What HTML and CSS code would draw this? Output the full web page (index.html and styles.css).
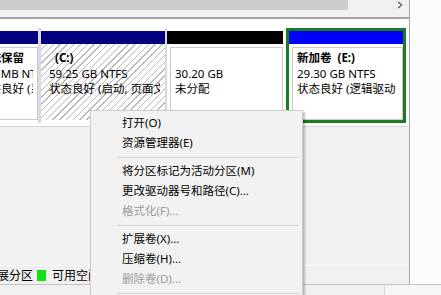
FILE: index.html
```html
<!DOCTYPE html>
<html lang="zh-CN">
	<head>
		<meta charset="UTF-8" />
		<title>磁盘管理</title>
		<link rel="stylesheet" href="styles.css">
	</head>
	<body>
		<div class="window">
			<div class="workspace">
				<div class="pane">
					<div class="hscroll">
						<div class="hscroll-thumb"></div>
						<svg class="hscroll-arrow" width="6" height="8" viewBox="0 0 6 8">
							<path d="M1.2 1 L4.6 4 L1.2 7" fill="none" stroke="#5f5f5f" stroke-width="1.3" />
						</svg>
					</div>
					<div class="graph">
						<div class="disk-row">
							<div class="part part-system">
								<div class="part-head head-primary"></div>
								<div class="part-body">
									<div class="part-box">
										<div class="part-text">
											<b>系统保留</b><br />500 MB NTFS<br />状态良好 (系统, 活动, 主分区)
										</div>
									</div>
								</div>
							</div>
							<div class="part part-c">
								<div class="part-head head-primary"></div>
								<div class="part-body">
									<div class="part-box">
										<div class="part-text">
											<b>&nbsp;&nbsp;(C:)</b><br />59.25 GB NTFS<br />状态良好 (启动, 页面文件, 故障转储, 主分区)
										</div>
									</div>
								</div>
							</div>
							<div class="part part-free">
								<div class="part-head head-free"></div>
								<div class="part-body">
									<div class="part-box">
										<div class="part-text">&nbsp;<br />30.20 GB<br />未分配</div>
									</div>
								</div>
							</div>
							<div class="part part-e">
								<div class="part-head head-logical"></div>
								<div class="part-body">
									<div class="part-box">
										<div class="part-text">
											<b>新加卷&nbsp; (E:)</b><br />29.30 GB NTFS<br />状态良好 (逻辑驱动器)
										</div>
									</div>
								</div>
							</div>
						</div>
						<div class="graph-fill"></div>
						<div class="legend">
							<span class="legend-swatch swatch-extended"></span>
							<span class="legend-text">扩展分区</span>
							<span class="legend-swatch swatch-free"></span>
							<span class="legend-text">可用空间</span>
						</div>
					</div>
				</div>
				<div class="side"></div>
			</div>
			<div class="statusbar">
				<div class="status-pane"></div>
				<div class="status-pane status-last"></div>
			</div>
		</div>

		<div class="context-menu">
			<div class="menu-item">打开(O)</div>
			<div class="menu-item">资源管理器(E)</div>
			<div class="menu-sep"></div>
			<div class="menu-item">将分区标记为活动分区(M)</div>
			<div class="menu-item">更改驱动器号和路径(C)...</div>
			<div class="menu-item disabled">格式化(F)...</div>
			<div class="menu-sep"></div>
			<div class="menu-item">扩展卷(X)...</div>
			<div class="menu-item">压缩卷(H)...</div>
			<div class="menu-item disabled">删除卷(D)...</div>
			<div class="menu-sep"></div>
		</div>
	</body>
</html>
```

FILE: styles.css
```css
* {
	margin: 0;
	padding: 0;
	box-sizing: border-box;
}

body {
	width: 441px;
	height: 295px;
	overflow: hidden;
	position: relative;
	background-color: #f0f0f0;
	font-family: "Noto Sans", "Noto Sans CJK SC", sans-serif;
	font-size: 12px;
	color: #000;
}

.window {
	display: flex;
	flex-direction: column;
	height: 295px;
}

.workspace {
	display: flex;
	height: 284px;
}

.pane {
	width: 410px;
	display: flex;
	flex-direction: column;
	border-right: 1px solid #a9a9a9;
}

.side {
	flex: 1;
	background-color: #fcfcfc;
}

/* horizontal scrollbar of the list view above */
.hscroll {
	height: 17px;
	display: flex;
	align-items: flex-start;
	background-color: #f0f0f0;
}

.hscroll-thumb {
	width: 348px;
	height: 10px;
	background-color: #cdcdcd;
}

.hscroll-arrow {
	margin-left: auto;
	margin-right: 6px;
	margin-top: 1px;
}

.graph {
	flex: 1;
	display: flex;
	flex-direction: column;
	border-top: 2px solid #a3a3a3;
}

.disk-row {
	height: 108px;
	display: flex;
	padding-top: 9px;
	background-color: #fff;
	border-bottom: 1px solid #d6d6d6;
	overflow: hidden;
}

.part {
	height: 95px;
	display: flex;
	flex-direction: column;
	padding: 3px 0;
	flex-shrink: 0;
}

.part-head {
	height: 13px;
}

.head-primary {
	background-color: #000080;
}

.head-free {
	background-color: #000;
}

.head-logical {
	background-color: #0000ff;
}

.part-body {
	flex: 1;
	padding: 3px 0 0 3px;
}

.part-box {
	height: 100%;
	border: 1px solid #c9c9c9;
	background-color: #fff;
	padding: 2px 4px;
}

.part-text {
	height: 100%;
	font-size: 11.5px;
	line-height: 15.5px;
	white-space: nowrap;
	overflow: hidden;
}

.part-system {
	width: 68px;
	margin-left: -30px;
}

.part-c {
	width: 127px;
	border-left: 3px solid #d9d9e2;
}

.part-c .part-body {
	background: repeating-linear-gradient(
		135deg,
		#ffffff 0,
		#ffffff 3.8px,
		#b9b9b9 3.8px,
		#b9b9b9 4.8px
	);
}

.part-c .part-box {
	background: transparent;
	border-color: transparent;
}

.part-free {
	width: 118px;
	border-left: 2px solid #d9d9e2;
}

.part-e {
	width: 120px;
	margin-left: 3px;
	padding: 0;
	border: 3px solid #1a7a1f;
}

.part-e .part-text {
	margin-right: 2px;
}

.graph-fill {
	flex: 1;
}

.legend {
	height: 19px;
	display: flex;
	align-items: center;
	margin-left: -30px;
	border-top: 1px solid #fafafa;
	white-space: nowrap;
}

.legend-swatch {
	width: 9px;
	height: 11px;
	margin-right: 6px;
}

.legend-text {
	margin-right: 4px;
}

.swatch-extended {
	background-color: #008000;
}

.swatch-free {
	background-color: #12e012;
}

.statusbar {
	flex: 1;
	display: flex;
	border-top: 1px solid #c4c4c4;
}

.status-pane {
	width: 384px;
}

.status-last {
	flex: 1;
	border-left: 1px solid #d8d8d8;
	background-color: #f6f6f6;
}

/* context menu over the disk view */
.context-menu {
	position: absolute;
	left: 90px;
	top: 110px;
	width: 213px;
	padding: 2px 0;
	background-color: #f2f2f2;
	border: 1px solid #cccccc;
	box-shadow: 2px 2px 2px rgba(0, 0, 0, 0.25);
	font-size: 11.5px;
}

.menu-item {
	height: 20px;
	line-height: 20px;
	padding-left: 31px;
	white-space: nowrap;
}

.menu-item.disabled {
	color: #9b9b9b;
}

.menu-sep {
	height: 8px;
	display: flex;
	align-items: center;
	padding: 0 3px 0 26px;
}

.menu-sep::before {
	content: "";
	flex: 1;
	height: 1px;
	background-color: #d7d7d7;
}
```
